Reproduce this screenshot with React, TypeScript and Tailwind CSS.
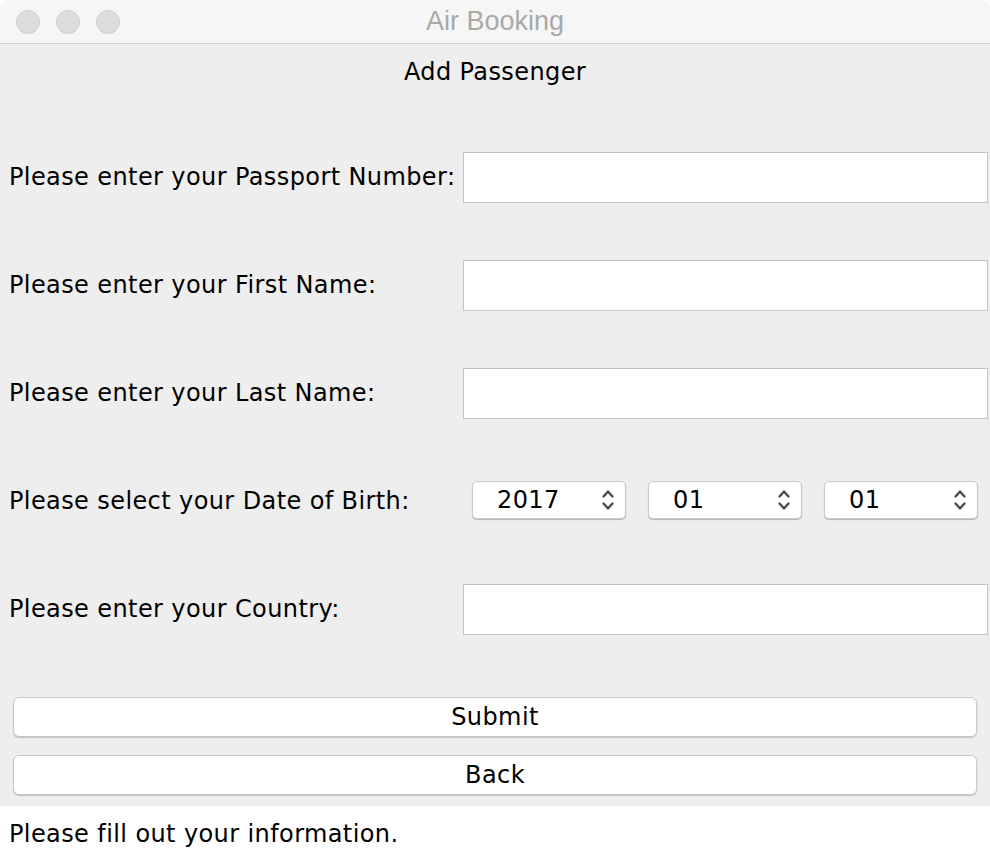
const font = { fontFamily: '"DejaVu Sans", "Noto Sans", sans-serif' };

function TextField() {
  return (
    <input
      type="text"
      className="w-[525px] h-[51px] bg-white border border-[#c4c4c4] outline-none px-2 text-[24px]"
    />
  );
}

function Spinner({ value }: { value: string }) {
  return (
    <div className="w-[154px] h-[38px] bg-white rounded-[5px] border border-[#c8c8c8] shadow-[0_1px_1px_rgba(0,0,0,0.25)] flex items-center justify-between pl-[24px] pr-[11px]">
      <span className="text-[24px] text-black leading-none tracking-[0.4px]">{value}</span>
      <svg width="12" height="24" viewBox="0 0 12 24" fill="none" stroke="#444" strokeWidth={2.2} strokeLinecap="round" strokeLinejoin="round">
        <polyline points="1.5,8.5 6,3.5 10.5,8.5" />
        <polyline points="1.5,15.5 6,20.5 10.5,15.5" />
      </svg>
    </div>
  );
}

function Row({ label, children }: { label: string; children: React.ReactNode }) {
  return (
    <div className="h-[108px] flex items-center justify-between pl-[9px] pr-[2px]">
      <span className="text-[24px] text-black whitespace-nowrap tracking-[0.4px]">{label}</span>
      {children}
    </div>
  );
}

export default function App() {
  return (
    <div className="w-[990px] h-[858px] bg-white flex flex-col" style={font}>
      <div className="h-[44px] bg-[#f6f6f6] border-b border-[#d0d0d0] rounded-t-[8px] relative flex items-center justify-center">
        <div className="absolute left-[16px] top-[10px] flex gap-[16px]">
          <span className="w-[24px] h-[24px] rounded-full bg-[#dcdcdc] border border-[#cdcdcd]" />
          <span className="w-[24px] h-[24px] rounded-full bg-[#dcdcdc] border border-[#cdcdcd]" />
          <span className="w-[24px] h-[24px] rounded-full bg-[#dcdcdc] border border-[#cdcdcd]" />
        </div>
        <span
          className="text-[27px] text-[#a9a9a9]"
          style={{ fontFamily: '"Liberation Sans", Arial, sans-serif' }}
        >
          Air Booking
        </span>
      </div>

      <div className="bg-[#eeeeee] flex flex-col h-[762px]">
        <div className="h-[55px] flex items-center justify-center pt-[1px]">
          <span className="text-[24px] text-black tracking-[0.4px]">Add Passenger</span>
        </div>
        <div className="h-[24px]" />

        <Row label="Please enter your Passport Number:">
          <TextField />
        </Row>
        <Row label="Please enter your First Name:">
          <TextField />
        </Row>
        <Row label="Please enter your Last Name:">
          <TextField />
        </Row>
        <Row label="Please select your Date of Birth:">
          <div className="flex gap-[22px] pr-[10px] pb-[2px]">
            <Spinner value="2017" />
            <Spinner value="01" />
            <Spinner value="01" />
          </div>
        </Row>
        <Row label="Please enter your Country:">
          <TextField />
        </Row>

        <div className="flex flex-col gap-[18px] px-[13px] pt-[34px]">
          <button className="h-[40px] bg-white rounded-[6px] border border-[#c8c8c8] shadow-[0_1px_1px_rgba(0,0,0,0.2)] text-[24px] text-black tracking-[0.4px]">
            Submit
          </button>
          <button className="h-[40px] bg-white rounded-[6px] border border-[#c8c8c8] shadow-[0_1px_1px_rgba(0,0,0,0.2)] text-[24px] text-black tracking-[0.4px]">
            Back
          </button>
        </div>
      </div>

      <div className="flex-1 bg-white pl-[9px] pt-[10px]">
        <span className="text-[24px] text-black tracking-[0.4px]">Please fill out your information.</span>
      </div>
    </div>
  );
}
